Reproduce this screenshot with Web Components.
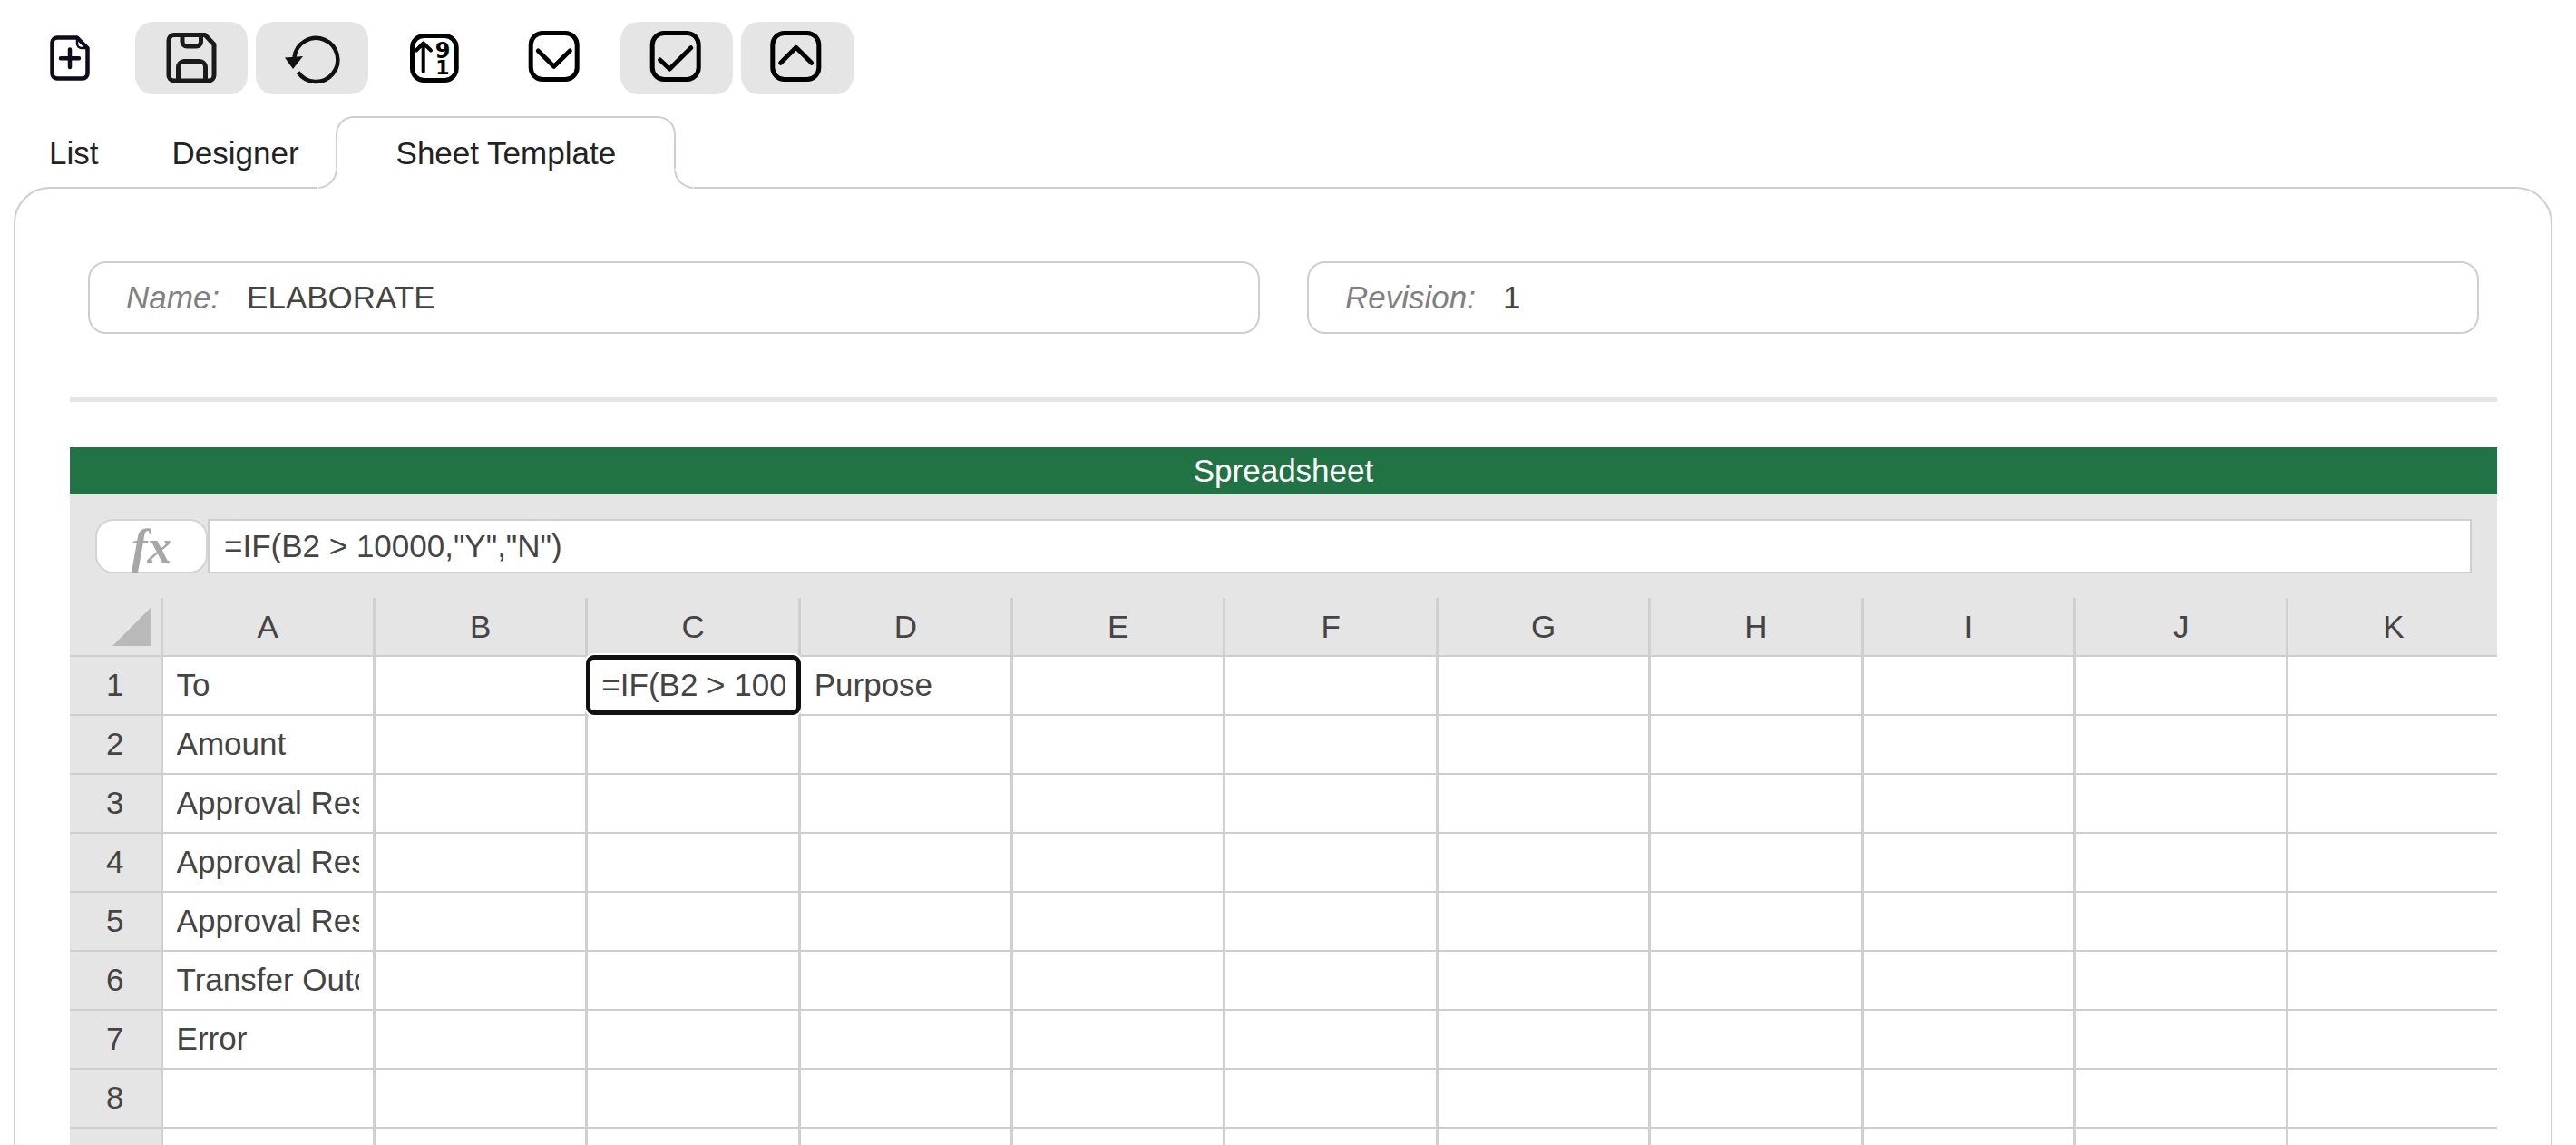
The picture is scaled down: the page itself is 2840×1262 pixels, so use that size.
<!DOCTYPE html>
<html>
<head>
<meta charset="utf-8">
<title>Sheet Template</title>
<style>
  html, body { margin: 0; height: 100%; overflow: hidden; background: #fff; }
  body { font-family: "Liberation Sans", Arial, sans-serif; font-size: 35px; color: #444; }
  icon-button[icon="check"] { margin-left: 3px; }
  tab-item:first-child { padding-right: 42px; }
</style>
</head>
<body>
  <app-toolbar>
    <icon-button icon="add"></icon-button>
    <icon-button icon="save" active></icon-button>
    <icon-button icon="undo" active></icon-button>
    <icon-button icon="sort"></icon-button>
    <icon-button icon="down"></icon-button>
    <icon-button icon="check" active></icon-button>
    <icon-button icon="up" active></icon-button>
  </app-toolbar>
  <tab-bar>
    <tab-item>List</tab-item>
    <tab-item>Designer</tab-item>
    <tab-item selected>Sheet Template</tab-item>
  </tab-bar>
  <tab-panel>
    <field-row>
      <text-field label="Name:" value="ELABORATE"></text-field>
      <text-field label="Revision:" value="1"></text-field>
    </field-row>
    <spread-sheet formula='=IF(B2 &gt; 10000,"Y","N")'></spread-sheet>
  </tab-panel>

<script>
const ICONS = {
  add: `<g stroke="#110a1c"><path stroke-width="4.5" d="M15 7.5H37L48.5 19V47a5.5 5.5 0 0 1-5.5 5.5H15A5.5 5.5 0 0 1 9.5 47V13A5.5 5.5 0 0 1 15 7.5Z"/><path stroke-width="2.5" d="M37 8V14a5 5 0 0 0 5 5H48"/><path stroke-width="4.5" d="M19 30.3H39M29 20.5V40"/></g>`,
  save: `<path stroke="#1a1a1a" stroke-width="5" d="M11 4.5H45L55 15V49a6 6 0 0 1-6 6H11a6 6 0 0 1-6-6V10.5a6 6 0 0 1 6-6Z"/><path stroke="#1a1a1a" stroke-width="5" d="M20 5V12a5 5 0 0 0 5 5H35.5a5 5 0 0 0 5-5V5M15.5 55V40a6.5 6.5 0 0 1 6.5-6.5H39a6.5 6.5 0 0 1 6.5 6.5V55"/>`,
  undo: `<path stroke="#111" stroke-width="4.5" stroke-linecap="butt" d="M14.5 45.5A24 24 0 1 0 10.5 29"/><path fill="#111" stroke="none" d="M0 29.5L20 28L9 42Z"/>`,
  sort: `<rect x="7.5" y="5.5" width="48.7" height="49" rx="13" stroke="#000" stroke-width="5"/><path stroke="#000" stroke-width="4" d="M19.7 45V13.5M12 21.5L19.7 13.5L28 21.5"/><text x="41" y="30" text-anchor="middle" font-family="DejaVu Sans" font-weight="700" font-size="24" fill="#000" stroke="none">9</text><text x="41" y="47.5" text-anchor="middle" font-family="DejaVu Sans" font-weight="700" font-size="22" fill="#000" stroke="none">1</text>`,
  down: `<rect x="5.2" y="2.5" width="51" height="51" rx="13" stroke="#000" stroke-width="5"/><path stroke="#000" stroke-width="5" d="M13.3 22L30.7 39.3L48.3 22"/>`,
  check: `<rect x="3.2" y="2.5" width="51" height="51" rx="13" stroke="#000" stroke-width="5"/><path stroke="#000" stroke-width="5" d="M11.7 32L22.3 42L45.7 18.7"/>`,
  up: `<rect x="2.8" y="2.5" width="51" height="51" rx="13" stroke="#000" stroke-width="5"/><path stroke="#000" stroke-width="5" d="M11.7 35.3L28.7 18.3L45.7 35.3"/>`
};

class AppToolbar extends HTMLElement {
  constructor() {
    super();
    this.attachShadow({ mode: 'open' }).innerHTML = `
      <style>
        :host { display: flex; gap: 9px; padding: 24px 0 0 16px; }
      </style>
      <slot></slot>`;
  }
}

class IconButton extends HTMLElement {
  connectedCallback() {
    const root = this.shadowRoot || this.attachShadow({ mode: 'open' });
    root.innerHTML = `
      <style>
        :host { display: flex; align-items: center; justify-content: center; width: 124px; height: 80px; border-radius: 20px; }
        :host([active]) { background: #e5e5e5; }
        svg { width: 60px; height: 60px; display: block; fill: none; stroke-linecap: round; stroke-linejoin: round; overflow: visible; }
      </style>
      <svg viewBox="0 0 60 60">${ICONS[this.getAttribute('icon')]}</svg>`;
  }
}

class TabBar extends HTMLElement {
  constructor() {
    super();
    this.attachShadow({ mode: 'open' }).innerHTML = `
      <style>
        :host { display: flex; height: 78px; margin-top: 24px; padding-left: 15px; position: relative; z-index: 1; }
      </style>
      <slot></slot>`;
  }
}

class TabItem extends HTMLElement {
  constructor() {
    super();
    this.attachShadow({ mode: 'open' }).innerHTML = `
      <style>
        :host { display: flex; align-items: center; height: 80px; box-sizing: border-box; padding: 1px 39px 0; font-size: 35px; color: #222; position: relative; }
        :host([selected]) { background: #fff; margin-left: 1px; padding: 1px 66px 0 67px; }
        .cap, .foot { display: none; position: absolute; }
        :host([selected]) .cap, :host([selected]) .foot { display: block; }
        .cap { top: 0; left: 0; right: 0; bottom: 20px; box-sizing: border-box; border: 2px solid #cecece; border-bottom: 0; border-radius: 20px 20px 0 0; }
        .foot { bottom: 0; width: 22px; height: 22px; background: #fff; overflow: hidden; }
        .foot::before { content: ""; display: block; box-sizing: border-box; width: 22px; height: 22px; border: 2px solid transparent; border-bottom-color: #cecece; }
        .left { left: -20px; }
        .left::before { border-right-color: #cecece; border-bottom-right-radius: 22px; }
        .right { right: -20px; }
        .right::before { border-left-color: #cecece; border-bottom-left-radius: 22px; }
      </style>
      <span class="cap"></span>
      <span class="foot left"></span>
      <span class="foot right"></span>
      <slot></slot>`;
  }
}

class TabPanel extends HTMLElement {
  constructor() {
    super();
    this.attachShadow({ mode: 'open' }).innerHTML = `
      <style>
        :host { display: block; box-sizing: border-box; margin: 0 26px 0 15px; padding: 80px 59px 0 60px; border: 2px solid #cecece; border-radius: 40px; height: 1120px; }
      </style>
      <slot></slot>`;
  }
}

class FieldRow extends HTMLElement {
  constructor() {
    super();
    this.attachShadow({ mode: 'open' }).innerHTML = `
      <style>
        :host { display: grid; grid-template-columns: 1fr 1fr; gap: 52px; padding: 0 20px 70px; }
      </style>
      <slot></slot>`;
  }
}

class TextField extends HTMLElement {
  connectedCallback() {
    const root = this.shadowRoot || this.attachShadow({ mode: 'open' });
    root.innerHTML = `
      <style>
        :host { display: flex; align-items: center; gap: 30px; box-sizing: border-box; height: 80px; padding: 0 40px; border: 2px solid #cecece; border-radius: 20px; }
        .label { font-style: italic; color: #808080; }
        .value { color: #444; }
      </style>
      <span class="label">${this.getAttribute('label')}</span>
      <span class="value">${this.getAttribute('value')}</span>`;
  }
}

const COLUMNS = ['A', 'B', 'C', 'D', 'E', 'F', 'G', 'H', 'I', 'J', 'K'];
const CELLS = {
  A1: 'To',
  C1: '=IF(B2 > 10000,"Y","N")',
  D1: 'Purpose',
  A2: 'Amount',
  A3: 'Approval Result',
  A4: 'Approval Result',
  A5: 'Approval Result',
  A6: 'Transfer Outcome',
  A7: 'Error'
};

class SpreadSheet extends HTMLElement {
  connectedCallback() {
    const root = this.shadowRoot || this.attachShadow({ mode: 'open' });
    const formula = this.getAttribute('formula').replace(/&/g, '&amp;').replace(/</g, '&lt;');
    let grid = `<div class="corner"><i></i></div>`;
    grid += COLUMNS.map(c => `<div class="col">${c}</div>`).join('');
    for (let r = 1; r <= 9; r++) {
      grid += `<div class="row">${r}</div>`;
      grid += COLUMNS.map(c => {
        const key = c + r;
        const text = (CELLS[key] || '').replace(/>/g, '&gt;');
        const sel = key === 'C1';
        return `<div class="cell${sel ? ' sel' : ''}"><span>${text}</span>${sel ? '<b></b>' : ''}</div>`;
      }).join('');
    }
    root.innerHTML = `
      <style>
        :host { display: block; color: #444; }
        .rule { height: 5px; background: #e4e4e9; margin-bottom: 50px; }
        .title { height: 52px; line-height: 52px; background: #217346; color: #fff; text-align: center; }
        .bar { display: flex; padding: 27px 28px; background: #e5e5e5; }
        .fx { box-sizing: border-box; width: 124px; height: 60px; flex: none; background: #fff; border: 2px solid #d4d4d4; border-radius: 20px; display: flex; align-items: center; justify-content: center; font: italic 700 53px/56px "Liberation Serif", serif; color: #a6a6a6; }
        .input { flex: 1; box-sizing: border-box; height: 60px; line-height: 56px; padding-left: 16px; background: #fff; border: 2px solid #cecece; }
        .grid { display: grid; grid-template-columns: 102.6px repeat(11, 234.38px); grid-auto-rows: 65px; overflow: hidden; margin-top: -27px; padding-top: 27px; background: #e5e5e5; }
        .grid > div { box-sizing: border-box; border-bottom: 2px solid #cecece; border-right: 3px solid #d0d0d0; display: flex; align-items: center; min-width: 0; }
        .corner { background: #e5e5e5; }
        .corner i { display: block; width: 43px; height: 43px; margin-left: 47px; background: #b9b9b9; clip-path: polygon(100% 0, 100% 100%, 0 100%); }
        .col, .row { justify-content: center; background: #e5e5e5; }
        .grid > .row { padding-bottom: 2px; }
        .grid > .cell { background: #fff; padding: 0 15px 2px; position: relative; }
        .cell span { display: block; flex: 1; min-width: 0; overflow: hidden; white-space: nowrap; }
        .grid > .cell.sel { z-index: 2; }
        .cell b { position: absolute; left: -2px; top: -2px; right: -3px; bottom: -1px; border: 5px solid #111; border-radius: 9px; box-shadow: 0 0 0 2px #fff; }
      </style>
      <div class="rule"></div>
      <div class="title">Spreadsheet</div>
      <div class="bar">
        <div class="fx">fx</div>
        <div class="input">${formula}</div>
      </div>
      <div class="grid">${grid}</div>`;
  }
}

customElements.define('app-toolbar', AppToolbar);
customElements.define('icon-button', IconButton);
customElements.define('tab-bar', TabBar);
customElements.define('tab-item', TabItem);
customElements.define('tab-panel', TabPanel);
customElements.define('field-row', FieldRow);
customElements.define('text-field', TextField);
customElements.define('spread-sheet', SpreadSheet);
</script>
</body>
</html>
